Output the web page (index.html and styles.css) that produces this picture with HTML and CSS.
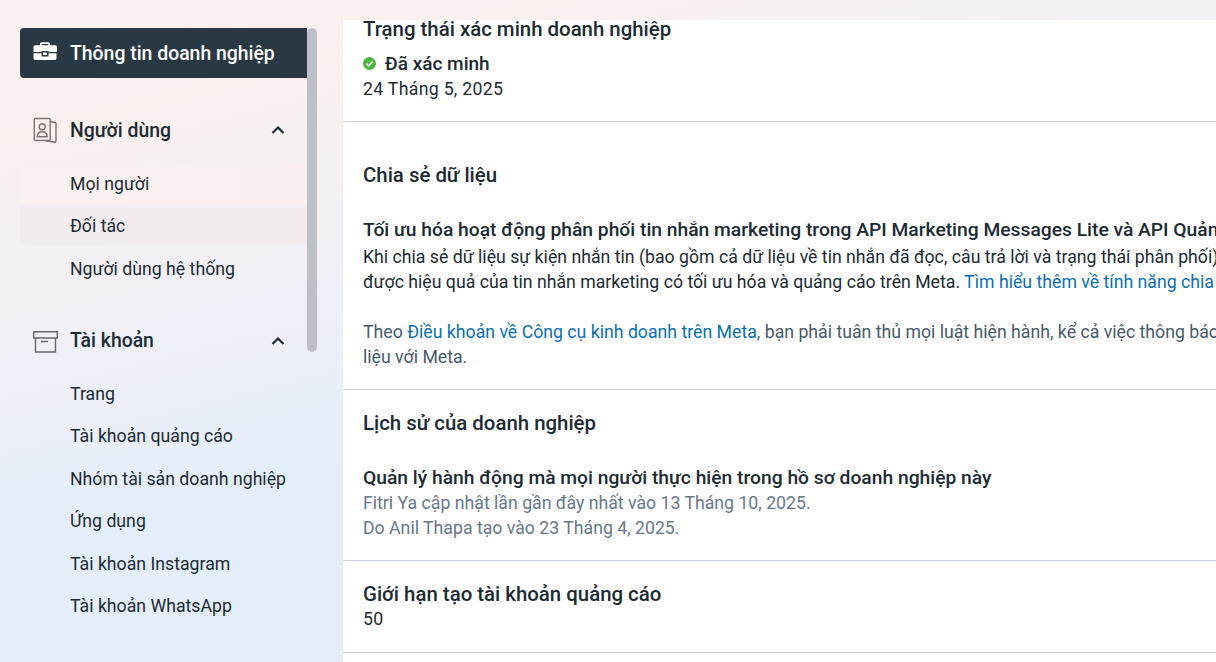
FILE: index.html
```html
<!DOCTYPE html>
<html lang="vi">
<head>
    <meta charset="UTF-8">
    <meta name="viewport" content="width=device-width, initial-scale=1.0">
    <title>Thông tin doanh nghiệp</title>
    <link rel="stylesheet" href="styles.css">
</head>
<body>
    <div class="page">
        <aside class="sidebar">
            <div class="scrollbar"></div>
            <a class="nav-active">
                <svg class="nav-icon" viewBox="0 0 24 24" width="24" height="24"><path fill="#fff" d="M7 4.300V3c0-1 .7-1.700 1.700-1.700h6.600c1 0 1.700.7 1.700 1.700v1.300h5.200c1 0 1.800.8 1.800 1.800v4.900H15.500V10h-7v1H.5V6.100c0-1 .8-1.800 1.800-1.800zM8.700 4.300h6.600V3H8.700zM.5 12.300h8v3.200h7v-3.200h8v5c0 1-.8 1.800-1.800 1.800H2.300c-1 0-1.800-.8-1.800-1.800zM10 11.500h4v2.600h-4z"/></svg>
                <span>Thông tin doanh nghiệp</span>
            </a>

            <div class="nav-group">
                <svg class="nav-icon" viewBox="0 0 24 26" width="24" height="26" fill="none" stroke="#7b7471" stroke-width="1.400"><path d="M2.500 1.500h13.500a1.200 1.200 0 0 1 1.200 1.200v19.600a1.200 1.200 0 0 1-1.200 1.200H2.500a1.200 1.200 0 0 1-1.200-1.200V2.700a1.200 1.200 0 0 1 1.200-1.200z"/><path d="M17.500 4.500l4.800 1.200a1 1 0 0 1 .7 1v17.600a1 1 0 0 1-1.200 1l-9-1.500"/><circle cx="9.200" cy="9.800" r="3"/><path d="M4.200 19.800c0-3.300 2-5 5-5s5 1.700 5 5z"/></svg>
                <span class="nav-title">Người dùng</span>
                <svg class="chevron" viewBox="0 0 14 10" width="14" height="10"><path d="M1.500 8L7 2.500 12.500 8" fill="none" stroke="#1c2b33" stroke-width="2.200"/></svg>
            </div>
            <ul class="nav-list">
                <li class="faint">Mọi người</li>
                <li class="hover">Đối tác</li>
                <li>Người dùng hệ thống</li>
            </ul>

            <div class="nav-group">
                <svg class="nav-icon" viewBox="0 0 24 24" width="24" height="24" fill="none" stroke="#5f676c" stroke-width="1.400"><path d="M.7 2.700h23.600v6.300H.7z"/><path d="M2.500 9v14h20V9M8 12.500h7"/></svg>
                <span class="nav-title">Tài khoản</span>
                <svg class="chevron" viewBox="0 0 14 10" width="14" height="10"><path d="M1.500 8L7 2.500 12.500 8" fill="none" stroke="#1c2b33" stroke-width="2.200"/></svg>
            </div>
            <ul class="nav-list">
                <li>Trang</li>
                <li>Tài khoản quảng cáo</li>
                <li>Nhóm tài sản doanh nghiệp</li>
                <li>Ứng dụng</li>
                <li>Tài khoản Instagram</li>
                <li>Tài khoản WhatsApp</li>
            </ul>
        </aside>

        <main class="content">
            <section class="block block-status">
                <h3>Trạng thái xác minh doanh nghiệp</h3>
                <p class="verified">
                    <svg viewBox="0 0 14 14" width="13" height="13"><circle cx="7" cy="7" r="7" fill="#4fb443"/><path d="M3.800 7.200l2.300 2.300L10.200 5" fill="none" stroke="#fff" stroke-width="1.800"/></svg>
                    <strong>Đã xác minh</strong>
                </p>
                <p class="number">24 Tháng 5, 2025</p>
            </section>

            <section class="block block-share">
                <h3 class="section-title">Chia sẻ dữ liệu</h3>
                <h4>Tối ưu hóa hoạt động phân phối tin nhắn marketing trong API Marketing Messages Lite và API Quản lý</h4>
                <p>Khi chia sẻ dữ liệu sự kiện nhắn tin (bao gồm cả dữ liệu về tin nhắn đã đọc, câu trả lời và trạng thái phân phối) với Meta</p>
                <p>được hiệu quả của tin nhắn marketing có tối ưu hóa và quảng cáo trên Meta. <a>Tìm hiểu thêm về tính năng chia sẻ dữ liệu</a></p>
                <p class="muted spaced">Theo <a>Điều khoản về Công cụ kinh doanh trên Meta</a>, bạn phải tuân thủ mọi luật hiện hành, kể cả việc thông báo khi chia sẻ dữ</p>
                <p class="muted">liệu với Meta.</p>
            </section>

            <section class="block block-history">
                <h3 class="section-title">Lịch sử của doanh nghiệp</h3>
                <h4>Quản lý hành động mà mọi người thực hiện trong hồ sơ doanh nghiệp này</h4>
                <p class="muted">Fitri Ya cập nhật lần gần đây nhất vào 13 Tháng 10, 2025.</p>
                <p class="muted">Do Anil Thapa tạo vào 23 Tháng 4, 2025.</p>
            </section>

            <section class="block block-limit">
                <h3>Giới hạn tạo tài khoản quảng cáo</h3>
                <p class="number">50</p>
            </section>
        </main>
    </div>
</body>
</html>
```

FILE: styles.css
```css
* {
    box-sizing: border-box;
}
html, body {
    margin: 0;
    height: 100%;
    overflow: hidden;
}
body {
    font-family: Roboto, "Noto Sans", sans-serif;
    font-size: 17.7px;
    line-height: 25px;
    color: #1c2b33;
}
.page {
    display: flex;
    height: 662px;
    padding-top: 20px;
    background: linear-gradient(166deg, #f9f1f1 0%, #faf0ee 15%, #f0f0f7 36%, #e3eefa 58%, #e3eefa 100%);
}
.sidebar {
    position: relative;
    flex: 0 0 343px;
    width: 343px;
    padding: 8px 36px 0 20px;
}
.scrollbar {
    position: absolute;
    left: 307px;
    top: 8px;
    width: 10px;
    height: 324px;
    border-radius: 5px;
    background: #bcc0c6;
}
.nav-active {
    display: flex;
    align-items: center;
    height: 50px;
    padding-left: 13px;
    gap: 13px;
    border-radius: 4px 0 0 4px;
    background: #293843;
    color: #fff;
    font-weight: 500;
    font-size: 19.400px;
}
.nav-icon {
    flex: none;
    overflow: visible;
}
.nav-group {
    display: flex;
    align-items: center;
    height: 50px;
    margin-top: 27px;
    padding-left: 13px;
    gap: 13px;
}
.nav-title {
    flex: 1;
    font-weight: 500;
    font-size: 19.400px;
}
.chevron {
    margin-right: 22px;
}
.nav-list {
    list-style: none;
    margin: 8.600px 0 0;
    padding: 0;
}
.nav-list + .nav-group + .nav-list {
    margin-top: 8.100px;
}
.nav-list li {
    height: 40px;
    margin-bottom: 2.500px;
    padding-left: 50px;
    line-height: 40px;
    border-radius: 6px 0 0 6px;
}
.nav-list .faint {
    background: linear-gradient(90deg, #faf1f0, #f8eff0);
}
.nav-list .hover {
    background: #f2ecf0;
}
.nav-group + .nav-list + .nav-group {
    margin-top: 27px;
}
.content {
    flex: 1;
    min-width: 0;
    background: #fff;
    overflow: hidden;
    white-space: nowrap;
}
.block {
    padding-left: 20px;
    border-bottom: 1px solid #cbd2d9;
}
.block h3,
.block h4,
.block p {
    margin: 0;
}
.block h3 {
    font-size: 20.400px;
    font-weight: 500;
    line-height: 24px;
}
.block h4 {
    font-size: 19.250px;
    font-weight: 500;
}
.block a {
    color: #0a6fb5;
}
.block-share .muted {
    color: #465a69;
}
.block-history .muted {
    color: #67788a;
}
.block .number {
    margin-top: 1px;
    letter-spacing: .3px;
}
.section-title {
    margin-bottom: 30px !important;
}
.spaced {
    margin-top: 25px !important;
}
.block-status {
    height: 102px;
}
.block-status h3 {
    line-height: 19px;
}
.verified {
    display: flex;
    align-items: center;
    gap: 9px;
    margin-top: 12px !important;
    font-size: 19px;
}
.verified strong {
    font-weight: 500;
}
.block-share {
    height: 268px;
    padding-top: 41px;
}
.block-share h4 {
    margin-bottom: 3px;
}
.block-history {
    height: 171px;
    padding-top: 21px;
}
.block-history h4 {
    margin-bottom: 1px;
}
.block-limit {
    height: 92px;
    padding-top: 21px;
}
```
